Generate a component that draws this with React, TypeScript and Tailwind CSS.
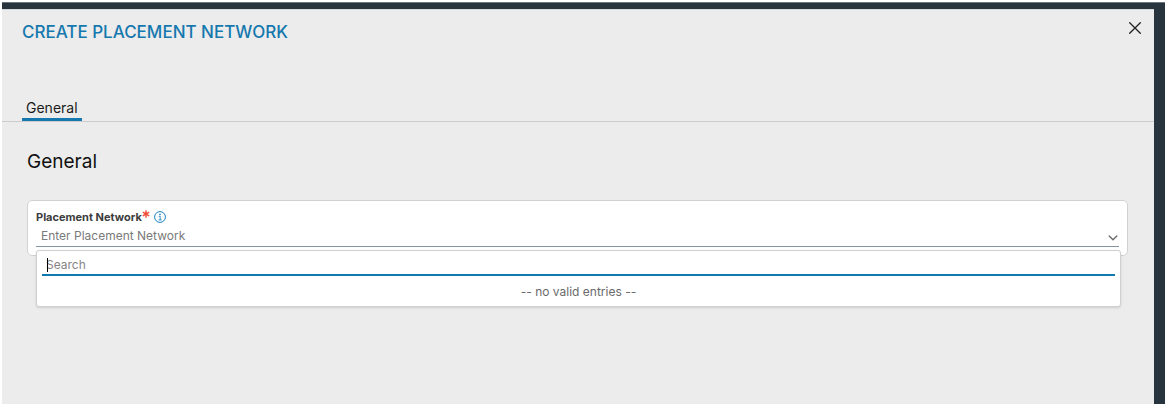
import { useState } from 'react'

function CloseIcon() {
  return (
    <svg viewBox="0 0 12 12" className="h-3 w-3" fill="none" stroke="currentColor" strokeWidth="1.3" strokeLinecap="round">
      <path d="M0.7 0.7 11.3 11.3M11.3 0.7 0.7 11.3" />
    </svg>
  )
}

function InfoIcon() {
  return (
    <svg viewBox="0 0 12 12" className="h-3 w-3" fill="none" stroke="currentColor">
      <circle cx="6" cy="6" r="5.4" strokeWidth="1" />
      <circle cx="6" cy="3.4" r="0.8" fill="currentColor" stroke="none" />
      <path d="M4.8 5.3H6.2V8.8M4.5 8.9H7.7" strokeWidth="0.9" />
    </svg>
  )
}

function RequiredIcon() {
  return (
    <svg viewBox="0 0 8 8" className="mb-1.5 h-2 w-2 text-[#ee4b36]" fill="none" stroke="currentColor" strokeWidth="1.4">
      <path d="M4 0.3V7.7M0.8 2.1 7.2 5.9M7.2 2.1 0.8 5.9" />
    </svg>
  )
}

function ChevronIcon() {
  return (
    <svg viewBox="0 0 10 6" className="mt-1 h-1.5 w-2.5 text-[#6b6b6b]" fill="none" stroke="currentColor" strokeWidth="1.4" strokeLinecap="round">
      <path d="M1.2 1 5 4.7 8.8 1" />
    </svg>
  )
}

function PlacementNetworkField() {
  const [open, setOpen] = useState(true)
  const [query, setQuery] = useState('')

  return (
    <div className="rounded-[5px] border border-[#d2d2d2] bg-white p-2">
      <div className="flex h-4 items-center">
        <label htmlFor="placement-network" className="text-[11px] leading-4 font-bold text-[#3c3c3c]">
          Placement Network
        </label>
        <RequiredIcon />
        <button type="button" aria-label="About placement network" className="ml-1 text-[#1b84c4]">
          <InfoIcon />
        </button>
      </div>

      <div className="relative">
        <button
          id="placement-network"
          type="button"
          aria-expanded={open}
          onClick={() => setOpen(!open)}
          className="flex w-full items-center justify-between border-b border-[#8595a1] pr-px pl-[5px] text-left text-xs leading-[21px] text-[#7a7a7a]"
        >
          Enter Placement Network
          <ChevronIcon />
        </button>

        {open && (
          <div className="absolute top-full -right-0.5 left-0 mt-[3px] rounded-[3px] border border-[#d0d0d0] bg-white px-[5px] pt-[3px] pb-1 shadow-sm">
            <div className="relative">
              <input
                type="text"
                aria-label="Search"
                placeholder="Search"
                value={query}
                onChange={(e) => setQuery(e.target.value)}
                className="block h-[22px] w-full border-b-2 border-[#0f79b0] px-1 text-xs text-[#333333] caret-transparent outline-none placeholder:text-[#858585] focus:caret-black"
              />
              {query === '' && <span className="absolute top-1 left-[5px] h-[14px] w-px bg-black" />}
            </div>
            <p className="pt-1.5 text-center text-xs leading-5 text-[#6a6a6a]">-- no valid entries --</p>
          </div>
        )}
      </div>
    </div>
  )
}

export default function App() {
  return (
    <div className="flex min-h-screen flex-col bg-white pt-0.5 pr-px pb-1 pl-0.5 font-['Inter','Liberation_Sans',sans-serif]">
      <div className="flex grow flex-col border-t border-[#68737b] bg-[#27333d] pt-1.5 pr-[11px]">
        <main className="grow border-t border-[#d3d7da] bg-[#ececec]">
          <header className="flex items-start justify-between pt-3 pr-[13px] pl-5">
            <h1 className="text-[17px] leading-5 font-medium text-[#1578ae]">CREATE PLACEMENT NETWORK</h1>
            <button type="button" aria-label="Close" className="text-[#222222]">
              <CloseIcon />
            </button>
          </header>

          <div role="tablist" className="mt-14 flex border-b border-[#cccccc] px-5">
            <button
              type="button"
              role="tab"
              aria-selected="true"
              className="border-b-[3px] border-[#1578ae] px-1 text-sm leading-5 text-[#1a1a1a]"
            >
              General
            </button>
          </div>

          <section className="pt-[26px] pr-[26px] pl-[25px]">
            <h2 className="mb-6 text-[19px] leading-7 text-[#111111]">General</h2>
            <PlacementNetworkField />
          </section>
        </main>
      </div>
    </div>
  )
}
